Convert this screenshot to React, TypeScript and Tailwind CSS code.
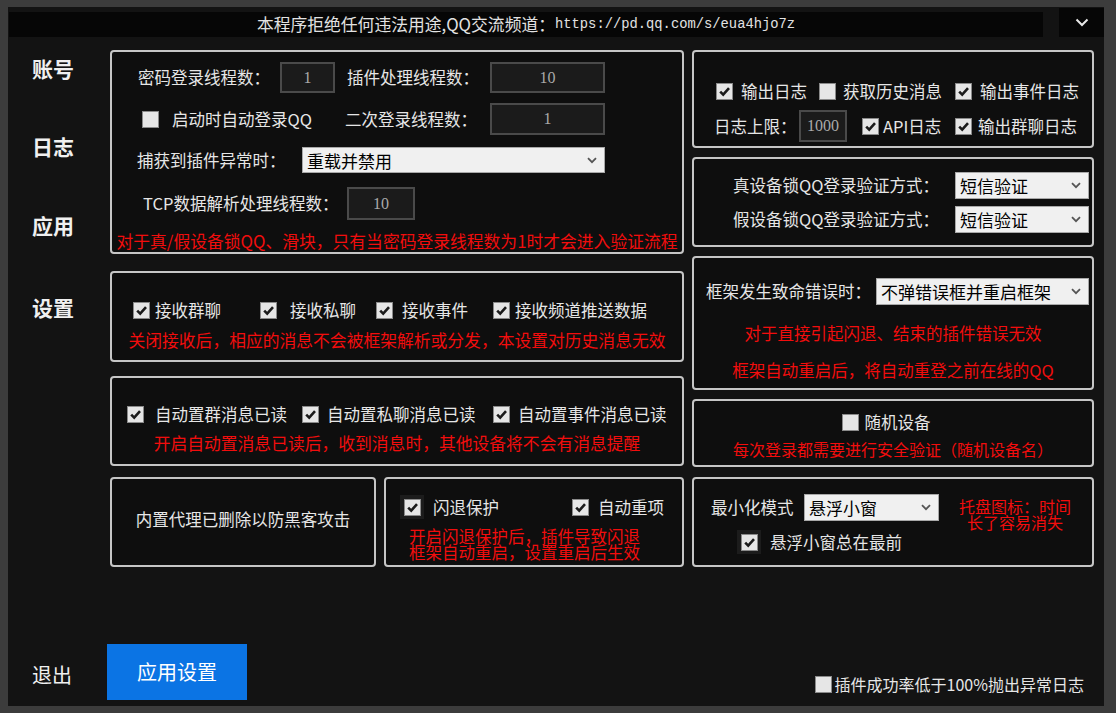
import React from "react";

function Cb({ checked = true }: { checked?: boolean }) {
  return (
    <span className="inline-flex w-[17px] h-[17px] shrink-0 items-center justify-center bg-[#e6e6e6] border border-[#8a8a8a]">
      {checked && (
        <svg width="13" height="13" viewBox="0 0 13 13">
          <path d="M2.2 6.6 L5.2 9.6 L11 3.2" fill="none" stroke="#1b1b1b" strokeWidth="2.6" />
        </svg>
      )}
    </span>
  );
}

function Sel({ text, className }: { text: string; className: string }) {
  return (
    <div className={"flex shrink-0 items-center justify-between bg-[#f0f0f0] border border-[#a8a8a8] pl-[4px] pr-[7px] text-black text-[17px] leading-none " + className}>
      <span>{text}</span>
      <svg width="10" height="7" viewBox="0 0 10 7">
        <path d="M1 1.2 L5 5.2 L9 1.2" fill="none" stroke="#555" strokeWidth="1.8" />
      </svg>
    </div>
  );
}

function Inp({ v, className }: { v: string; className: string }) {
  return (
    <div className={"flex shrink-0 items-center justify-center bg-[#1b1b1b] border-2 border-[#4a4a4a] text-[#aaaaaa] font-['Liberation_Serif',serif] text-[16px] " + className}>
      {v}
    </div>
  );
}

function Panel({ className, children }: { className: string; children?: React.ReactNode }) {
  return (
    <div className={"border-2 border-[#c6c6c6] rounded-[4px] bg-[#0e0e0e] " + className}>{children}</div>
  );
}

const red = "text-[#f20d0d]";

export default function App() {
  return (
    <div className="w-[1116px] h-[713px] bg-[#3c3c3c] pt-[7px] pl-[8px] pr-[12px] pb-[7px] font-['Noto_Sans_CJK_SC','Liberation_Sans',sans-serif] text-[#e6e6e6] text-[16.5px] whitespace-nowrap">
      <div className="h-full bg-[#131313] flex flex-col">
        {/* top bar */}
        <div className="flex h-[30px] shrink-0">
          <div className="mt-[5px] ml-[1px] w-[1034px] h-[25px] bg-[#060606] flex items-center justify-center leading-none text-[#e2e2e2]">
            <span className="text-[16.8px]">本程序拒绝任何违法用途,QQ交流频道：</span>
            <span className="font-['Liberation_Mono',monospace] text-[13.8px]">https://pd.qq.com/s/eua4hjo7z</span>
          </div>
          <div className="ml-[16px] mt-[1px] w-[45px] h-[29px] bg-[#060606] flex items-center justify-center">
            <svg width="14" height="9" viewBox="0 0 14 9">
              <path d="M1.5 1.5 L7 7 L12.5 1.5" fill="none" stroke="#e8e8e8" strokeWidth="2" />
            </svg>
          </div>
        </div>

        {/* body */}
        <div className="flex mt-[13px] h-[517px] shrink-0">
          {/* sidebar */}
          <div className="w-[102px] shrink-0 flex flex-col pl-[24px] text-[21px] font-bold leading-[24px] text-[#f0f0f0]">
            <div className="mt-[6px] h-[24px]">账号</div>
            <div className="mt-[54px] h-[24px]">日志</div>
            <div className="mt-[55px] h-[24px]">应用</div>
            <div className="mt-[58px] h-[24px]">设置</div>
          </div>

          {/* left column */}
          <div className="w-[574px] shrink-0 flex flex-col">
            <Panel className="h-[204px] flex flex-col">
              <div className="mt-[10px] h-[31px] flex items-center pl-[26px]">
                <span className="w-[142px] shrink-0">密码登录线程数：</span>
                <Inp v="1" className="w-[55px] h-[31px]" />
                <span className="ml-[12px] w-[143px] shrink-0">插件处理线程数：</span>
                <Inp v="10" className="w-[115px] h-[31px]" />
              </div>
              <div className="mt-[10px] h-[32px] flex items-center pl-[30px]">
                <div className="w-[203px] shrink-0 flex items-center">
                  <Cb checked={false} />
                  <span className="ml-[13px]">启动时自动登录QQ</span>
                </div>
                <span className="w-[145px] shrink-0">二次登录线程数：</span>
                <Inp v="1" className="w-[115px] h-[32px]" />
              </div>
              <div className="mt-[12px] h-[26px] flex items-center pl-[25px]">
                <span className="w-[165px] shrink-0">捕获到插件异常时：</span>
                <Sel text="重载并禁用" className="w-[303px] h-[26px]" />
              </div>
              <div className="mt-[14px] h-[33px] flex items-center pl-[31px]">
                <span className="w-[204px] shrink-0">TCP数据解析处理线程数：</span>
                <Inp v="10" className="w-[68px] h-[33px]" />
              </div>
              <div className={"mt-[12px] h-[18px] leading-[18px] text-center text-[16.8px] " + red}>
                对于真/假设备锁QQ、滑块，只有当密码登录线程数为1时才会进入验证流程
              </div>
            </Panel>

            <Panel className="mt-[17px] h-[91px] flex flex-col">
              <div className="mt-[27px] h-[20px] flex items-center pl-[21px]">
                <div className="w-[127px] shrink-0 flex items-center"><Cb /><span className="ml-[5px]">接收群聊</span></div>
                <div className="w-[116px] shrink-0 flex items-center"><Cb /><span className="ml-[13px]">接收私聊</span></div>
                <div className="w-[117px] shrink-0 flex items-center"><Cb /><span className="ml-[9px]">接收事件</span></div>
                <div className="flex items-center"><Cb /><span className="ml-[5px]">接收频道推送数据</span></div>
              </div>
              <div className={"mt-[11px] h-[18px] leading-[18px] text-center text-[16.8px] " + red}>
                关闭接收后，相应的消息不会被框架解析或分发，本设置对历史消息无效
              </div>
            </Panel>

            <Panel className="mt-[14px] h-[90px] flex flex-col">
              <div className="mt-[26px] h-[20px] flex items-center pl-[15px]">
                <div className="w-[175px] shrink-0 flex items-center"><Cb /><span className="ml-[11px]">自动置群消息已读</span></div>
                <div className="w-[191px] shrink-0 flex items-center"><Cb /><span className="ml-[8px]">自动置私聊消息已读</span></div>
                <div className="flex items-center"><Cb /><span className="ml-[8px]">自动置事件消息已读</span></div>
              </div>
              <div className={"mt-[10px] h-[18px] leading-[18px] text-center text-[16.8px] " + red}>
                开启自动置消息已读后，收到消息时，其他设备将不会有消息提醒
              </div>
            </Panel>

            <div className="mt-[11px] h-[90px] flex gap-[8px]">
              <Panel className="w-[266px] shrink-0 h-[90px] flex items-center justify-center pb-[6px]">
                <span className="leading-[20px]">内置代理已删除以防黑客攻击</span>
              </Panel>
              <Panel className="w-[300px] shrink-0 h-[90px] flex flex-col">
                <div className="mt-[16px] h-[24px] flex items-center pl-[14px]">
                  <div className="w-[172px] shrink-0 flex items-center">
                    <span className="w-[24px] h-[24px] bg-[#1c1c1c] flex items-center justify-center"><Cb /></span>
                    <span className="ml-[9px]">闪退保护</span>
                  </div>
                  <div className="flex items-center"><Cb /><span className="ml-[9px]">自动重项</span></div>
                </div>
                <div className={"mt-[9px] pl-[23px] text-[16.5px] leading-[16px] " + red}>
                  <div>开启闪退保护后，插件导致闪退</div>
                  <div>框架自动重启，设置重启后生效</div>
                </div>
              </Panel>
            </div>
          </div>

          {/* right column */}
          <div className="ml-[8px] w-[402px] shrink-0 flex flex-col">
            <Panel className="h-[98px] flex flex-col">
              <div className="mt-[29px] h-[20px] flex items-center pl-[22px]">
                <div className="w-[103px] shrink-0 flex items-center"><Cb /><span className="ml-[8px]">输出日志</span></div>
                <div className="w-[136px] shrink-0 flex items-center"><Cb checked={false} /><span className="ml-[7px]">获取历史消息</span></div>
                <div className="flex items-center"><Cb /><span className="ml-[8px]">输出事件日志</span></div>
              </div>
              <div className="mt-[9px] h-[32px] flex items-center pl-[20px]">
                <span className="w-[85px] shrink-0">日志上限：</span>
                <Inp v="1000" className="w-[48px] h-[32px] text-[14px] text-[#8c8c8c]" />
                <div className="ml-[15px] w-[93px] shrink-0 flex items-center"><Cb /><span className="ml-[4px]">API日志</span></div>
                <div className="flex items-center"><Cb /><span className="ml-[6px]">输出群聊日志</span></div>
              </div>
            </Panel>

            <Panel className="mt-[9px] h-[90px] flex flex-col">
              <div className="mt-[13px] h-[27px] flex items-center justify-end pr-[3px]">
                <span className="mr-[16px]">真设备锁QQ登录验证方式：</span>
                <Sel text="短信验证" className="w-[134px] h-[27px]" />
              </div>
              <div className="mt-[7px] h-[27px] flex items-center justify-end pr-[3px]">
                <span className="mr-[16px]">假设备锁QQ登录验证方式：</span>
                <Sel text="短信验证" className="w-[134px] h-[27px]" />
              </div>
            </Panel>

            <Panel className="mt-[9px] h-[134px] flex flex-col">
              <div className="mt-[20px] h-[27px] flex items-center pl-[12px]">
                <span className="w-[170px] shrink-0">框架发生致命错误时：</span>
                <Sel text="不弹错误框并重启框架" className="w-[213px] h-[27px]" />
              </div>
              <div className={"mt-[19px] h-[18px] leading-[18px] text-center " + red}>
                对于直接引起闪退、结束的插件错误无效
              </div>
              <div className={"mt-[19px] h-[18px] leading-[18px] text-center " + red}>
                框架自动重启后，将自动重登之前在线的QQ
              </div>
            </Panel>

            <Panel className="mt-[9px] h-[68px] flex flex-col">
              <div className="mt-[12px] h-[18px] flex items-center justify-center pr-[14px]">
                <Cb checked={false} />
                <span className="ml-[6px]">随机设备</span>
              </div>
              <div className={"mt-[9px] h-[18px] leading-[18px] text-center text-[16px] " + red}>
                每次登录都需要进行安全验证（随机设备名）
              </div>
            </Panel>

            <Panel className="mt-[10px] h-[90px] flex flex-col">
              <div className="mt-[15px] h-[27px] flex items-start pl-[17px]">
                <span className="w-[93px] shrink-0 h-[27px] leading-[27px]">最小化模式</span>
                <Sel text="悬浮小窗" className="w-[135px] h-[27px]" />
                <div className={"ml-[16px] mt-[4px] w-[120px] shrink-0 text-center text-[16px] leading-[16px] " + red}>
                  <div>托盘图标：时间</div>
                  <div>长了容易消失</div>
                </div>
              </div>
              <div className="mt-[9px] h-[24px] flex items-center pl-[43px]">
                <span className="w-[24px] h-[24px] bg-[#1c1c1c] flex items-center justify-center"><Cb /></span>
                <span className="ml-[9px]">悬浮小窗总在最前</span>
              </div>
            </Panel>
          </div>
        </div>

        {/* bottom */}
        <div className="mt-[77px] h-[56px] flex items-center shrink-0">
          <span className="ml-[24px] w-[44px] shrink-0 pt-[6px] text-[20px] leading-[24px] text-[#f0f0f0]">退出</span>
          <div className="ml-[31px] w-[140px] h-[56px] shrink-0 bg-[#0b74e4] flex items-center justify-center text-[20px] text-white">
            应用设置
          </div>
          <div className="ml-auto mr-[20px] self-end mb-[7px] flex items-center">
            <Cb checked={false} />
            <span className="ml-[3px] text-[16px] leading-[18px]">插件成功率低于100%抛出异常日志</span>
          </div>
        </div>
      </div>
    </div>
  );
}
